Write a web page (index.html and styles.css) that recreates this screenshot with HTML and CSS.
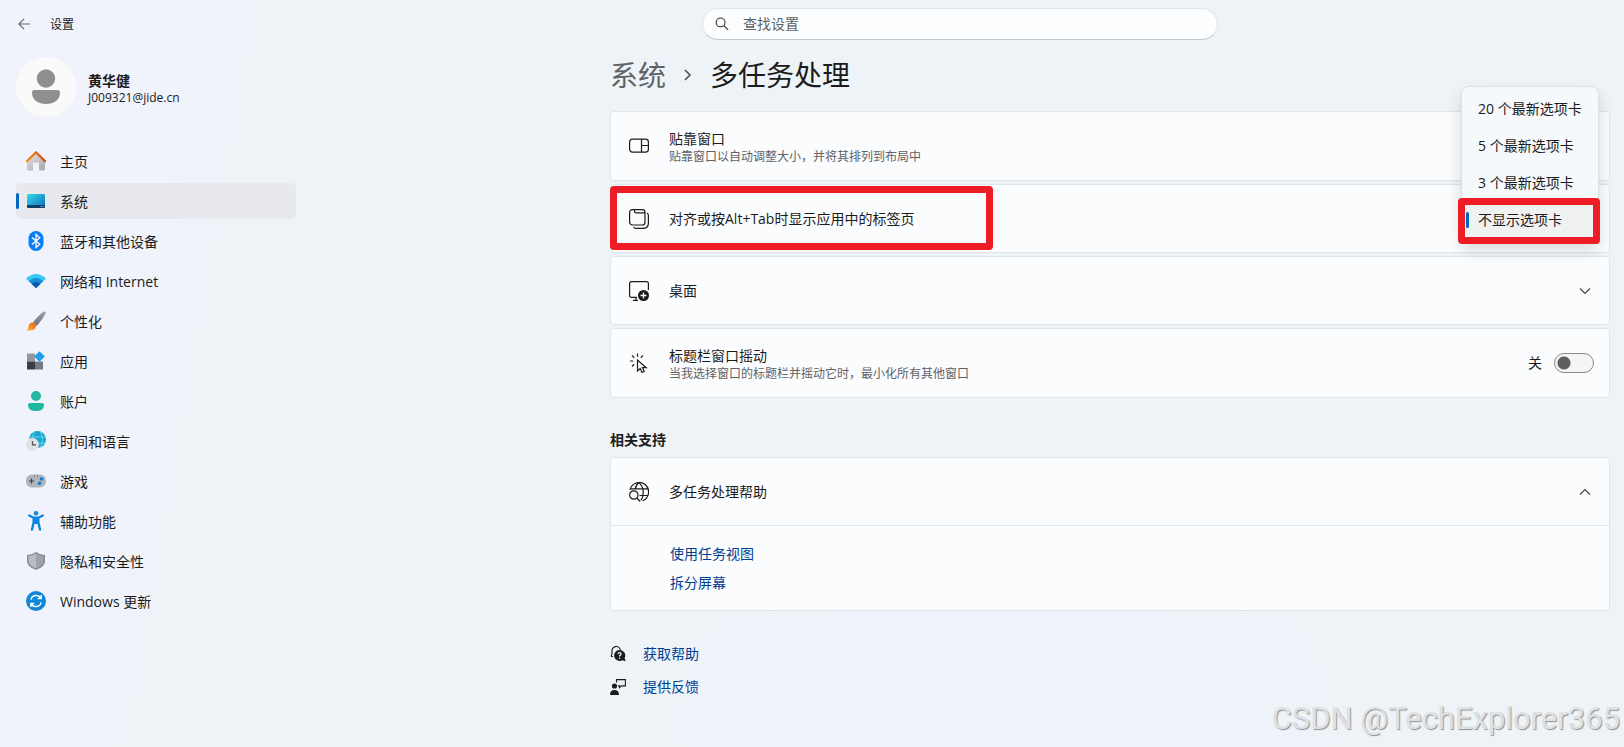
FILE: index.html
```html
<!DOCTYPE html>
<html lang="zh-CN">
<head>
    <meta charset="UTF-8">
    <meta name="viewport" content="width=device-width, initial-scale=1.0">
    <title>设置</title>
    <link rel="stylesheet" href="styles.css">
</head>
<body>
    <header class="titlebar">
        <button class="back" aria-label="返回">
            <svg width="12" height="12" viewBox="0 0 12 12"><path d="M12 6H.8M6 .8.8 6 6 11.2" fill="none" stroke="#666" stroke-width="1.1"/></svg>
        </button>
        <span class="app-title">设置</span>
        <div class="search">
            <svg width="14" height="14" viewBox="0 0 14 14"><circle cx="5.6" cy="5.4" r="4.4" fill="none" stroke="#333" stroke-width="1.1"/><path d="m8.9 8.7 4.2 4.2" stroke="#333" stroke-width="1.2"/></svg>
            <input type="text" placeholder="查找设置" aria-label="查找设置">
        </div>
    </header>
    <div class="container">
        <aside class="sidebar">
            <div class="account">
                <svg class="avatar" viewBox="0 0 60 60"><circle cx="30" cy="30" r="30" fill="#fafafa"/><circle cx="30" cy="21.500" r="9.200" fill="#8f8f8f"/><path d="M18.500 33h23q2.500 0 2.500 2.500C44 43 38 47 30 47s-14-4-14-11.500Q16 33 18.500 33z" fill="#8f8f8f"/></svg>
                <div class="who">
                    <div class="name">黄华健</div>
                    <div class="email">J009321@jide.cn</div>
                </div>
            </div>
            <nav class="nav">
                <a href="#">
                    <svg viewBox="0 0 20 20"><defs><linearGradient id="wall" x2="1" y2="1"><stop stop-color="#e4e4e4"/><stop offset="1" stop-color="#a8a8a8"/></linearGradient><linearGradient id="roof" x2="1"><stop stop-color="#f08a1c"/><stop offset="1" stop-color="#d9480a"/></linearGradient></defs><path d="M1 9 10 1.500 19 9v9q0 1.500-1.500 1.500H13v-8H7v8H2.500Q1 19.500 1 18z" fill="url(#wall)"/><path d="M.9 10.200 10 1.300l9.100 8.900" fill="none" stroke="url(#roof)" stroke-width="2.300" stroke-linejoin="round" stroke-linecap="round"/></svg>
                    <span>主页</span></a>
                <a href="#" class="active">
                    <svg viewBox="0 0 20 20"><defs><linearGradient id="screen" x2="1" y2="1"><stop stop-color="#37dbe8"/><stop offset="1" stop-color="#0f6cbf"/></linearGradient></defs><rect x="1" y="3" width="18" height="14" rx="1.200" fill="url(#screen)"/><path d="M1 14h18v1.800q0 1.200-1.200 1.200H2.200Q1 17 1 15.800z" fill="#0b4068"/><path d="M14.500 15.500h1m1 0h1" stroke="#9cf" stroke-width="1"/></svg>
                    <span>系统</span></a>
                <a href="#">
                    <svg viewBox="0 0 20 20"><rect x="2.500" width="15" height="20" rx="7.500" fill="#0a7cf5"/><path d="m6 6.500 7.700 6.800-3.700 3.200v-13l3.700 3.200L6 13.500" fill="none" stroke="#fff" stroke-width="1.300"/></svg>
                    <span>蓝牙和其他设备</span></a>
                <a href="#">
                    <svg viewBox="0 0 20 20"><path d="M0 7.500Q10-1.500 20 7.500L10 17z" fill="#35c8f2"/><path d="M2.800 10.200Q10 3.800 17.200 10.200L10 17z" fill="#168fd8"/><path d="M5.700 12.900Q10 9 14.300 12.900L10 17z" fill="#0b56a5"/></svg>
                    <span>网络和 Internet</span></a>
                <a href="#">
                    <svg viewBox="0 0 20 20"><defs><linearGradient id="handle" x1="1" x2="0" y2="1"><stop stop-color="#9aa3ad"/><stop offset="1" stop-color="#68717b"/></linearGradient><linearGradient id="bristle" x2="1" y1="1" y2="0"><stop stop-color="#ffb43a"/><stop offset="1" stop-color="#f0600b"/></linearGradient></defs><path d="M17.500 .8q2.600-1 2 1.800Q17 8 10.800 15L7 11.200Q13 4 17.500 .8z" fill="url(#handle)"/><path d="M6.800 11.400q4 1 3.200 4.300Q8.200 20.500.5 19.300q2.200-1.300 2-4.300.6-3.800 4.300-3.600z" fill="url(#bristle)"/></svg>
                    <span>个性化</span></a>
                <a href="#">
                    <svg viewBox="0 0 20 20"><path d="M1 2.500h8v8H1z" fill="#9299a2"/><path d="M1 10.500h8v8H1z" fill="#393e44"/><path d="M9 10.500h8v8H9z" fill="#747b84"/><rect x="9.700" y="1.700" width="7.600" height="7.600" rx=".8" transform="rotate(45 13.500 5.500)" fill="#1f9cea"/></svg>
                    <span>应用</span></a>
                <a href="#">
                    <svg viewBox="0 0 20 20"><circle cx="10" cy="5" r="5" fill="#22b8a2"/><path d="M4 12h12q2 0 2 2 0 6-8 6t-8-6q0-2 2-2z" fill="#1db8a2"/></svg>
                    <span>账户</span></a>
                <a href="#">
                    <svg viewBox="0 0 20 20"><circle cx="11.500" cy="8.500" r="8.500" fill="#16a6ce"/><path d="M3.500 6h16M4 12h15M8.500 1q-4 8 0 15M14.500 1q4 8 0 15" fill="none" stroke="#68d5ef"/><circle cx="6.500" cy="13.500" r="6.500" fill="#e2e2e2"/><path d="M6.500 10v3.800H10" fill="none" stroke="#50565c" stroke-width="1.300"/></svg>
                    <span>时间和语言</span></a>
                <a href="#">
                    <svg viewBox="0 0 20 20"><rect y="3.500" width="20" height="13" rx="6.200" fill="#b0b5bb"/><path d="M3 10h5M5.500 7.500v5" stroke="#3d4248" stroke-width="1.200"/><path d="M8 5h1m2 0h1" stroke="#555"/><circle cx="15.500" cy="8" r="1.800" fill="#0f78d4"/><circle cx="13.500" cy="12.200" r="1.800" fill="#0f78d4"/></svg>
                    <span>游戏</span></a>
                <a href="#">
                    <svg viewBox="0 0 20 20"><circle cx="10" cy="2.300" r="2.300" fill="#1687dc"/><path d="m3.200 4.500 4.300 2.200h5l4.300-2.200M7.700 6.800v4.500L6 18.600M12.300 6.800v4.500l1.700 7.300" fill="none" stroke="#0f86df" stroke-width="2.400" stroke-linecap="round" stroke-linejoin="round"/><path d="M7.500 6h5v7h-5z" fill="#0f86df"/></svg>
                    <span>辅助功能</span></a>
                <a href="#">
                    <svg viewBox="0 0 20 20"><path d="M10 1q4 3 9 3v6q0 6-9 9-9-3-9-9V4q5 0 9-3z" fill="#858b91"/><path d="M10 2.500q3.500 2.300 7.500 2.600V10q0 5-7.500 7.500z" fill="#9da2a7"/><path d="M10 2.500Q6.500 4.800 2.500 5.100V10q0 5 7.500 7.500z" fill="#b9bdc1"/></svg>
                    <span>隐私和安全性</span></a>
                <a href="#">
                    <svg viewBox="0 0 20 20"><circle cx="10" cy="10" r="10" fill="#0f86d8"/><path d="M4.800 8.700A5.500 5.500 0 0 1 14.800 7M15.200 11.300A5.500 5.500 0 0 1 5.200 13M15.200 4v3.500h-3.500M4.800 16v-3.500h3.500" fill="none" stroke="#fff" stroke-width="1.400"/></svg>
                    <span>Windows 更新</span></a>
            </nav>
        </aside>

        <main class="content">
            <h1 class="breadcrumb">
                <a href="#">系统</a>
                <svg width="8" height="14" viewBox="0 0 8 14"><path d="m1 2 5 5-5 5" fill="none" stroke="#555" stroke-width="1.700"/></svg>
                <span>多任务处理</span>
            </h1>

            <div class="cards">
                <section class="card two-line">
                    <svg class="icon" viewBox="0 0 20 20"><rect x=".6" y="3.100" width="18.800" height="13" rx="2.800"/><path d="M12.500 3.100v13M12.500 9.500h6.900"/></svg>
                    <div class="text">
                        <h2>贴靠窗口</h2>
                        <p>贴靠窗口以自动调整大小，并将其排列到布局中</p>
                    </div>
                </section>

                <section class="card">
                    <svg class="icon" viewBox="0 0 20 20"><rect x=".6" y=".6" width="15.400" height="15.400" rx="2.800"/><path d="M5.500.6v1.600q0 1.600 1.600 1.600H16M18 4q1.400.8 1.400 2.500V14q0 5.400-5.400 5.400H7q-1.700 0-2.500-1.400"/></svg>
                    <h2>对齐或按Alt+Tab时显示应用中的标签页</h2>
                    <div class="mark mark-row"></div>
                    <div class="dropdown" role="listbox" aria-label="标签页">
                        <button role="option">20 个最新选项卡</button>
                        <button role="option">5 个最新选项卡</button>
                        <button role="option">3 个最新选项卡</button>
                        <button role="option" class="selected" aria-selected="true">不显示选项卡</button>
                        <div class="mark mark-option"></div>
                    </div>
                </section>

                <section class="card">
                    <svg class="icon" viewBox="0 0 20 20"><path d="M8 16.400H2.600q-2 0-2-2v-11.800q0-2 2-2h14.800q2 0 2 2V9M7 16.400v3M4 19.400h5"/><circle cx="14.500" cy="14.500" r="5.500" fill="#1b1b1b" stroke="none"/><path d="M11.500 14.500h6M14.500 11.500v6" stroke="#fff" stroke-width="1.300"/></svg>
                    <h2>桌面</h2>
                    <button class="expand" aria-label="展开">
                        <svg width="12" height="8" viewBox="0 0 12 8"><path d="m1 1.500 5 5 5-5"/></svg>
                    </button>
                </section>

                <section class="card two-line">
                    <svg class="icon" viewBox="0 0 20 20"><path d="M8.500 7v11l2.700-2.400 1.800 3.800 2.200-1-1.700-3.700h3.700zM8.500.5v3.300M3 2.300l2.200 2.500M14 2.300l-2.200 2.500M1 8h3.300M3 13.500l2.200-2.300"/></svg>
                    <div class="text">
                        <h2>标题栏窗口摇动</h2>
                        <p>当我选择窗口的标题栏并摇动它时，最小化所有其他窗口</p>
                    </div>
                    <label class="toggle">关 <input type="checkbox" role="switch" aria-label="标题栏窗口摇动"></label>
                </section>
            </div>

            <h3 class="group-title">相关支持</h3>
            <section class="support">
                <div class="card">
                    <svg class="icon" viewBox="0 0 20 20"><path d="M1 8A9.400 9.400 0 1 1 13.500 18.700M1.500 6.800h17M10.500 13.500h8M10 .6q-3 2-3.800 6.500M10 .6q4.300 4 4.200 9.400 0 5.500-2.200 8"/><circle cx="4.800" cy="13" r="4.200"/><path d="m7.800 16 3.400 3.500"/></svg>
                    <h2>多任务处理帮助</h2>
                    <button class="expand" aria-label="折叠">
                        <svg width="12" height="8" viewBox="0 0 12 8"><path d="m1 6.500 5-5 5 5"/></svg>
                    </button>
                </div>
                <div class="links">
                    <a href="#">使用任务视图</a>
                    <a href="#">拆分屏幕</a>
                </div>
            </section>

            <div class="help">
                <a href="#">
                    <svg viewBox="0 0 16 16"><path d="M1.200 10.500 2 7.200V5.500a4 4 0 0 1 8.300-1.500M1 10.500h2" fill="none" stroke="#1b1b1b" stroke-width="1.100"/><path d="M9.500 4a5.500 5.500 0 1 0 2.800 10.300l3.400 1-1.100-3.200A5.500 5.500 0 0 0 9.500 4z" fill="#1b1b1b"/><path d="M8 8.200q.2-1.500 1.600-1.500 1.500 0 1.500 1.300 0 .8-1.500 1.800v.7M9.600 11.500v1.200" fill="none" stroke="#fff" stroke-width="1.200"/></svg>
                    获取帮助</a>
                <a href="#">
                    <svg viewBox="0 0 16 16"><circle cx="4.500" cy="7" r="2.600" fill="#1b1b1b"/><path d="M0 16q0-5 4.500-5T9 16z" fill="#1b1b1b"/><path d="M6.500 3.500V.6h8.900v6.300h-3.900L9.500 8.500V6.900H8" fill="none" stroke="#1b1b1b" stroke-width="1.100"/></svg>
                    提供反馈</a>
            </div>
        </main>
    </div>
    <div class="watermark">CSDN @TechExplorer365</div>
</body>
</html>
```
FILE: styles.css
```css
* {
    box-sizing: border-box;
}
body {
    margin: 0;
    min-height: 100vh;
    font-family: "Open Sans", "Noto Sans CJK SC", sans-serif;
    font-size: 14px;
    line-height: 20px;
    color: #1b1b1b;
    background-color: #eef3f8;
    background-image:
        radial-gradient(ellipse at 62% 100%, #eff3fc 0, #eff3fc 12%, transparent 28%),
        linear-gradient(100deg, #f0f3fb 0, #f0f3fb 9%, #eef3f7 18%);
}
button,
input {
    font: inherit;
    color: inherit;
}
h1, h2, h3, p {
    margin: 0;
    font-weight: 400;
}
h2 {
    font-size: 14px;
}
a {
    color: #003e92;
    text-decoration: none;
}
.titlebar {
    display: flex;
    align-items: center;
    height: 48px;
}
.back {
    display: flex;
    padding: 6px;
    margin-left: 12px;
    border: none;
    background: none;
}
.app-title {
    margin-left: 14px;
    padding-top: 2px;
    font-size: 12px;
}
.search {
    display: flex;
    align-items: center;
    gap: 14px;
    width: 516px;
    height: 32px;
    margin-left: auto;
    margin-right: 25%;
    padding: 0 12px;
    border: 1px solid #dfe5ea;
    border-bottom-color: #c2c8cc;
    border-radius: 16px;
    background: #fbfdfe;
}
.search input {
    flex: 1;
    padding: 0;
    border: none;
    outline: none;
    background: none;
}
.search input::placeholder {
    color: #5f6163;
    opacity: 1;
}
.container {
    display: flex;
    justify-content: space-between;
    gap: 24px;
}
.sidebar {
    flex: none;
    width: 296px;
    padding: 9px 0 0 16px;
}
.account {
    display: flex;
    align-items: center;
    gap: 12px;
    margin-bottom: 26px;
}
.avatar {
    width: 60px;
    height: 60px;
}
.who {
    padding-top: 3px;
}
.name {
    font-weight: 700;
    line-height: 18px;
}
.email {
    font-size: 12px;
    line-height: 16px;
}
.nav {
    display: flex;
    flex-direction: column;
    gap: 4px;
}
.nav a {
    position: relative;
    display: flex;
    align-items: center;
    gap: 14px;
    height: 36px;
    padding: 0 10px;
    border-radius: 5px;
    color: #1b1b1b;
}
.nav svg {
    width: 20px;
    height: 20px;
}
.nav span {
    padding-top: 2px;
}
.nav .active {
    background: #e7e9ee;
}
.nav .active::before,
.selected::before {
    content: "";
    position: absolute;
    left: 0;
    top: 10px;
    width: 3px;
    height: 16px;
    border-radius: 2px;
    background: #0067c0;
}
.content {
    flex: 1;
    max-width: 1014px;
    padding: 9px 14px 0 0;
}
.breadcrumb {
    display: flex;
    align-items: center;
    gap: 18px;
    margin-bottom: 18px;
    font-size: 28px;
    line-height: 36px;
}
.breadcrumb a {
    color: #5f6265;
}
.cards {
    display: flex;
    flex-direction: column;
    gap: 3px;
}
.card {
    position: relative;
    display: flex;
    align-items: center;
    min-height: 69px;
    padding: 0 18px;
    border: 1px solid #dfe5ea;
    border-radius: 4px;
    background: #fbfcfe;
}
.two-line {
    min-height: 70px;
}
.icon {
    width: 20px;
    height: 20px;
    margin-right: 20px;
    fill: none;
    stroke: #1b1b1b;
    stroke-width: 1.2;
}
.text {
    padding-top: 3px;
}
.text h2,
.text p {
    line-height: 18px;
}
.text p {
    font-size: 12px;
    color: #5f6163;
}
.expand {
    display: flex;
    margin-left: auto;
    padding: 0;
    border: none;
    background: none;
}
.expand path {
    fill: none;
    stroke: #444;
    stroke-width: 1.2;
}
.toggle {
    display: flex;
    align-items: center;
    gap: 12px;
    margin: 0 -3px 0 auto;
}
.toggle input {
    appearance: none;
    width: 40px;
    height: 20px;
    margin: 0;
    border: 1px solid #86888a;
    border-radius: 10px;
    background: radial-gradient(circle at 9px 9px, #5d5f60 6px, #f4f5f7 7px);
}
.dropdown {
    position: absolute;
    z-index: 1;
    top: -99px;
    right: 10px;
    width: 138px;
    padding: 4px;
    display: flex;
    flex-direction: column;
    gap: 2px;
    border: 1px solid #dbe0e5;
    border-radius: 8px;
    background: #f5f9fc;
    box-shadow: 0 8px 16px rgba(0, 0, 0, 0.14);
}
.dropdown button {
    position: relative;
    height: 35px;
    padding: 0 12px;
    border: none;
    border-radius: 4px;
    background: none;
    text-align: left;
    white-space: nowrap;
}
.dropdown .selected {
    background: #f0f1f1;
}
.mark {
    position: absolute;
    border: 7px solid #ee1c25;
    border-radius: 4px;
    pointer-events: none;
}
.mark-row {
    top: 1px;
    left: -1px;
    width: 383px;
    height: 64px;
}
.mark-option {
    right: -2px;
    bottom: -3px;
    left: -4px;
    height: 46px;
}
.group-title {
    margin: 32px 0 7px;
    font-size: 14px;
    font-weight: 700;
}
.support .card {
    border-radius: 4px 4px 0 0;
}
.links {
    display: flex;
    flex-direction: column;
    align-items: flex-start;
    gap: 9px;
    padding: 18px 59px 17px;
    border: 1px solid #dfe5ea;
    border-top: none;
    border-radius: 0 0 4px 4px;
    background: #fbfcfe;
}
.help {
    display: flex;
    flex-direction: column;
    align-items: flex-start;
    gap: 13px;
    margin-top: 33px;
}
.help a {
    display: flex;
    align-items: center;
    gap: 17px;
}
.help svg {
    width: 16px;
    height: 16px;
}
.watermark {
    position: absolute;
    right: 4px;
    bottom: 10px;
    font-family: Roboto, sans-serif;
    font-size: 31px;
    line-height: 36px;
    color: #dfe1e4;
    text-shadow: 1px 1px 1px #8f9194;
}
```
